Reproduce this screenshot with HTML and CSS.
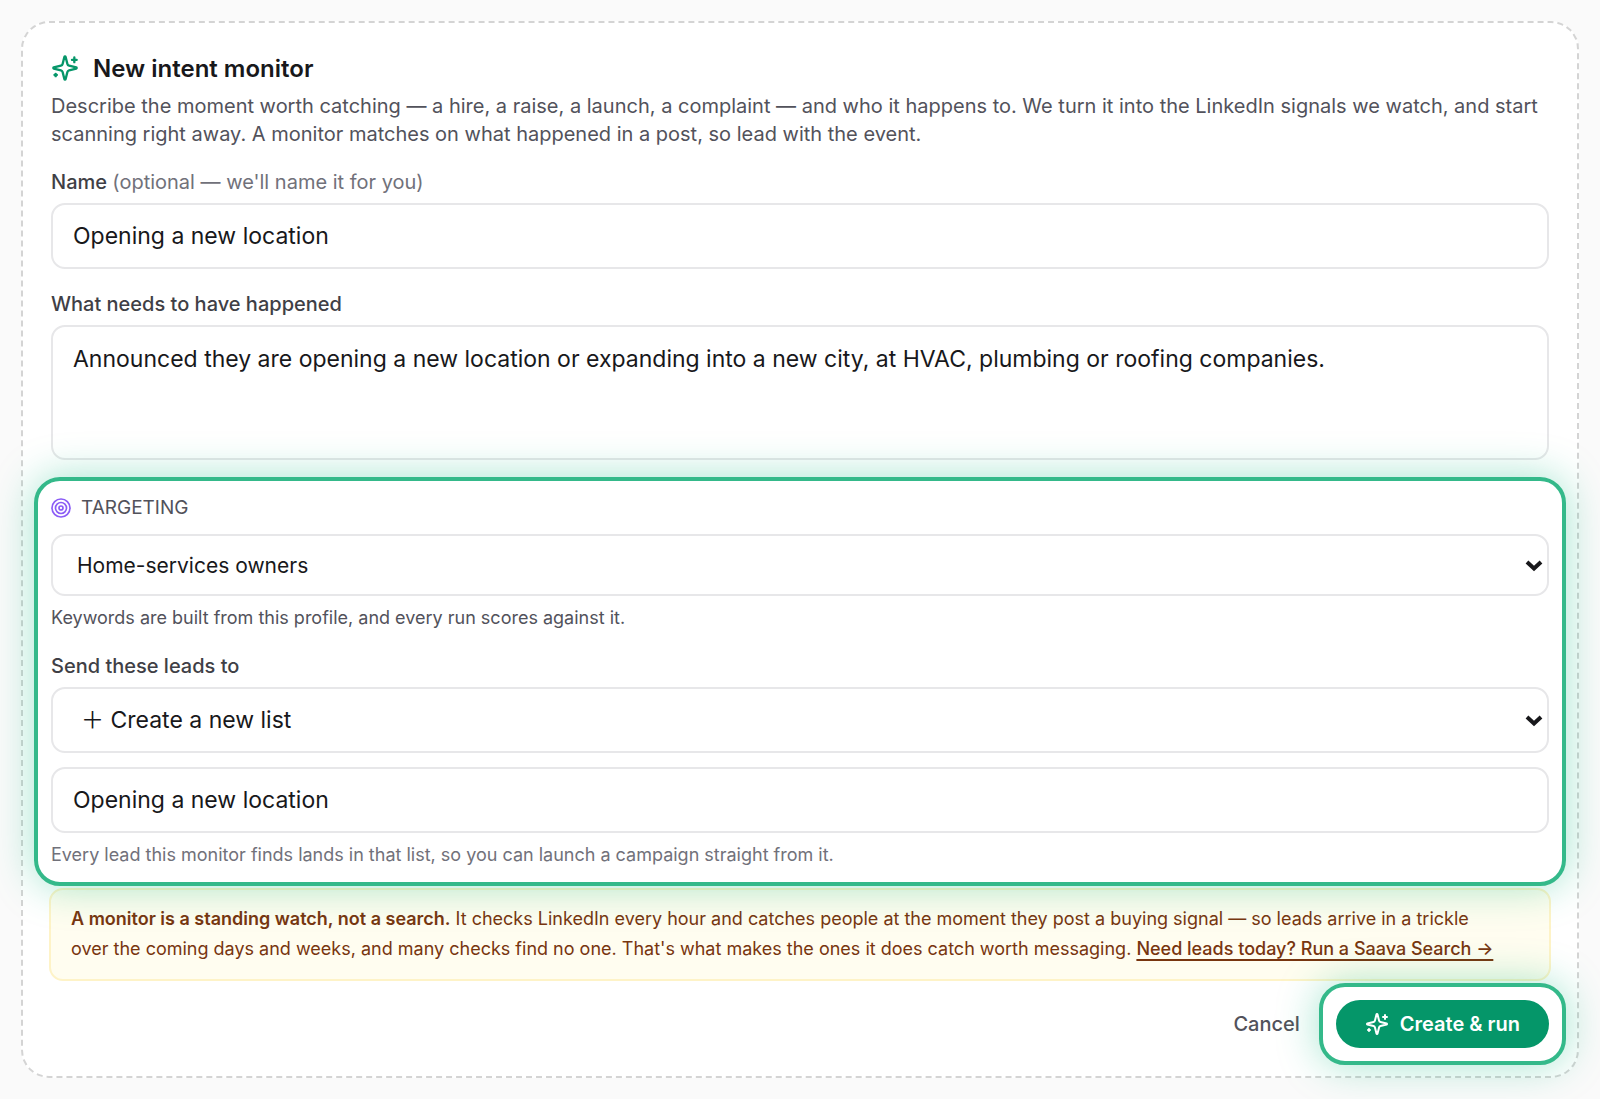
FILE: index.html
```html
<!DOCTYPE html>
<html lang="en">
<head>
    <meta charset="utf-8">
    <meta name="viewport" content="width=device-width, initial-scale=1">
    <title>New intent monitor</title>
    <link rel="stylesheet" href="styles.css">
</head>
<body>

<form class="card">
    <!-- Heading -->
    <div class="card-title">
        <svg class="icon-title" viewBox="0 0 24 24" aria-hidden="true">
            <path d="M9.94 15.5A2 2 0 0 0 8.5 14.06l-6.14-1.58a.5.5 0 0 1 0-.96L8.5 9.94A2 2 0 0 0 9.94 8.5l1.58-6.14a.5.5 0 0 1 .96 0l1.58 6.14a2 2 0 0 0 1.44 1.44l6.14 1.58a.5.5 0 0 1 0 .96l-6.14 1.58a2 2 0 0 0-1.44 1.44l-1.58 6.14a.5.5 0 0 1-.96 0z"/>
            <path d="M20 3v4M22 5h-4M4 17v2M5 18H3"/>
        </svg>
        <h1>New intent monitor</h1>
    </div>
    <p class="intro">Describe the moment worth catching — a hire, a raise, a launch, a complaint — and who it happens to. We turn it into the LinkedIn signals we watch, and start scanning right away. A monitor matches on what happened in a post, so lead with the event.</p>

    <label class="label" for="monitorName">Name <span class="optional">(optional — we'll name it for you)</span></label>
    <input class="field" type="text" id="monitorName" value="Opening a new location">

    <label class="label" for="monitorEvent">What needs to have happened</label>
    <textarea class="field field-area" id="monitorEvent">Announced they are opening a new location or expanding into a new city, at HVAC, plumbing or roofing companies.</textarea>

    <!-- Targeting and destination list -->
    <div class="spotlight targeting">
        <label class="section-label" for="profile">
            <svg class="icon-target" viewBox="0 0 24 24" aria-hidden="true">
                <circle cx="12" cy="12" r="10.8"/>
                <circle cx="12" cy="12" r="6.6"/>
                <circle cx="12" cy="12" r="2.4"/>
            </svg>
            TARGETING
        </label>
        <div class="select-wrap">
            <select class="field field-profile" id="profile">
                <option>Home-services owners</option>
            </select>
            <svg class="chevron" viewBox="0 0 16 10" aria-hidden="true"><path d="M1 1l7 6.5L15 1"/></svg>
        </div>
        <p class="hint hint-dark">Keywords are built from this profile, and every run scores against it.</p>

        <label class="label" for="leadList">Send these leads to</label>
        <div class="select-wrap">
            <select class="field field-list" id="leadList">
                <option>＋ Create a new list</option>
            </select>
            <svg class="chevron" viewBox="0 0 16 10" aria-hidden="true"><path d="M1 1l7 6.5L15 1"/></svg>
        </div>
        <input class="field field-new-list" type="text" id="listName" aria-label="New list name" value="Opening a new location">
        <p class="hint">Every lead this monitor finds lands in that list, so you can launch a campaign straight from it.</p>
    </div>

    <p class="notice"><strong>A monitor is a standing watch, not a search.</strong> It checks LinkedIn every hour and catches people at the moment they post a buying signal — so leads arrive in a trickle over the coming days and weeks, and many checks find no one. That's what makes the ones it does catch worth messaging. <a href="#search">Need leads today? Run a Saava Search →</a></p>

    <!-- Actions -->
    <div class="actions">
        <button type="button" class="cancel">Cancel</button>
        <div class="spotlight submit-wrap">
            <button type="submit" class="submit">
                <svg class="icon-submit" viewBox="0 0 24 24" aria-hidden="true">
                    <path d="M9.94 15.5A2 2 0 0 0 8.5 14.06l-6.14-1.58a.5.5 0 0 1 0-.96L8.5 9.94A2 2 0 0 0 9.94 8.5l1.58-6.14a.5.5 0 0 1 .96 0l1.58 6.14a2 2 0 0 0 1.44 1.44l6.14 1.58a.5.5 0 0 1 0 .96l-6.14 1.58a2 2 0 0 0-1.44 1.44l-1.58 6.14a.5.5 0 0 1-.96 0z"/>
                    <path d="M20 3v4M22 5h-4M4 17v2M5 18H3"/>
                </svg>
                Create &amp; run
            </button>
        </div>
    </div>
</form>

</body>
</html>
```
FILE: styles.css
```css
* {
    box-sizing: border-box;
}

body {
    margin: 0;
    padding: 21px;
    background: #fafafa;
    color: #18181b;
    font-family: Inter, "Liberation Sans", "Noto Sans CJK SC", sans-serif;
}

h1,
p {
    margin: 0;
}

button,
input,
select,
textarea {
    font-family: inherit;
}

.card {
    padding: 28px 28px 11px;
    border: 2px dashed #d4d4d4;
    border-radius: 28px;
    background: #fff;
}

.card-title {
    display: flex;
    align-items: center;
    gap: 14px;
    height: 34px;
}

.card-title h1 {
    font-size: 24px;
    font-weight: 600;
}

.icon-title,
.icon-submit,
.icon-target,
.chevron {
    flex: none;
    fill: none;
    stroke: currentColor;
    stroke-width: 2;
    stroke-linecap: round;
    stroke-linejoin: round;
}

.icon-title {
    width: 28px;
    height: 28px;
    color: #059669;
}

.intro {
    margin: 7px 0 20px;
    color: #52525b;
    font-size: 20px;
    line-height: 28px;
}

.label {
    display: block;
    margin-bottom: 7px;
    color: #3f3f46;
    font-size: 20px;
    font-weight: 500;
    line-height: 28px;
}

.optional {
    color: #71717a;
    font-weight: 400;
}

.field {
    display: block;
    width: 100%;
    height: 66px;
    padding: 0 20px;
    border: 2px solid #e7e7e9;
    border-radius: 14px;
    background: #fff;
    color: #18181b;
    font-size: 23px;
}

input.field {
    margin-bottom: 21px;
}

.field-area {
    height: 135px;
    margin-bottom: 17px;
    padding: 14px 20px;
    line-height: 36px;
    resize: none;
}

/* Green ring with a soft glow that falls over its neighbours */
.spotlight {
    position: relative;
    z-index: 1;
    border: 4px solid #34b98a;
    border-radius: 26px;
    box-shadow: 0 0 42px rgba(16, 185, 129, 0.38);
}

.targeting {
    margin: 0 -17px;
    padding: 13px 13px;
}

.section-label {
    display: flex;
    align-items: center;
    gap: 10px;
    margin-bottom: 12px;
    color: #52525b;
    font-size: 19px;
    line-height: 28px;
}

.icon-target {
    width: 20px;
    height: 20px;
    color: #8b5cf6;
}

.select-wrap {
    position: relative;
}

select.field {
    padding: 0 24px;
    appearance: none;
}

select.field-profile {
    height: 62px;
    font-size: 21px;
}

select.field-list {
    padding: 0 28px;
}

.chevron {
    position: absolute;
    top: 50%;
    right: 7px;
    width: 16px;
    height: 10px;
    margin-top: -4px;
    stroke-linecap: butt;
    stroke-linejoin: miter;
    stroke-width: 4;
    overflow: visible;
    pointer-events: none;
}

.hint {
    color: #71717a;
    font-size: 18px;
    line-height: 28px;
}

.hint-dark {
    margin: 8px 0 20px;
    color: #52525b;
}

input.field-new-list {
    margin: 14px 0 8px;
}

.notice {
    margin: 2px -2px 0;
    padding: 14px 43px 15px 20px;
    border: 2px solid #fef3c7;
    border-radius: 14px;
    background: #fffdf0;
    color: #78350f;
    font-size: 18px;
    line-height: 30px;
}

.notice strong {
    font-weight: 600;
}

.notice a {
    color: inherit;
    font-weight: 500;
    text-decoration-thickness: 2px;
    text-underline-offset: 4px;
}

.actions {
    display: flex;
    justify-content: flex-end;
    align-items: center;
    gap: 19px;
    margin: 2px -17px 0 0;
}

.cancel,
.submit {
    border: 0;
    background: none;
    color: #52525b;
    font-size: 20px;
    font-weight: 500;
    cursor: pointer;
}

.cancel {
    padding: 0;
}

.submit-wrap {
    padding: 13px;
    background: #fff;
}

.submit {
    display: flex;
    align-items: center;
    gap: 11px;
    height: 48px;
    padding: 0 29px;
    border-radius: 24px;
    background: #059669;
    color: #fff;
    font-weight: 600;
}

.icon-submit {
    width: 24px;
    height: 24px;
}
```
